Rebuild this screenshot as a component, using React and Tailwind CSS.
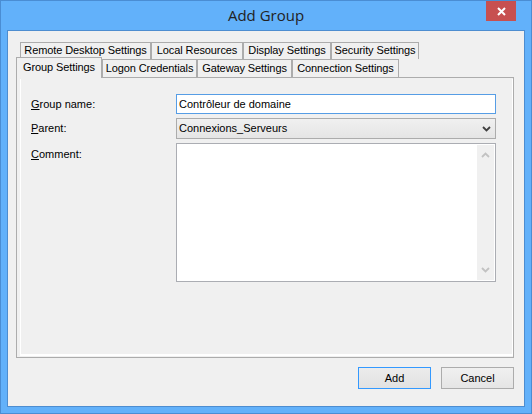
const topTabs = [
  { label: 'Remote Desktop Settings', w: 'w-[131px]' },
  { label: 'Local Resources', w: 'w-[92px]' },
  { label: 'Display Settings', w: 'w-[88px]' },
  { label: 'Security Settings', w: 'w-[88px]' },
];

const bottomTabs = [
  { label: 'Logon Credentials', w: 'w-[95px]' },
  { label: 'Gateway Settings', w: 'w-[95px]' },
  { label: 'Connection Settings', w: 'w-[107px]' },
];

function Chevron({ up, color, className }) {
  return (
    <svg width="9" height="6" viewBox="0 0 9 6" className={className}>
      <path
        d={up ? 'M1 5 L4.5 1.5 L8 5' : 'M1 1 L4.5 4.5 L8 1'}
        fill="none"
        stroke={color}
        strokeWidth="1.8"
      />
    </svg>
  );
}

function Label({ k, rest }) {
  return (
    <span>
      <span className="underline">{k}</span>
      {rest}
    </span>
  );
}

export default function App() {
  return (
    <div className="w-[532px] h-[414px] flex flex-col border border-[#4a8dd3] bg-[#62b1fa] font-['Liberation_Sans',Arial,sans-serif] text-[11px] text-black">
      {/* Title bar */}
      <div className="h-[29px] flex items-start relative">
        <div className="flex-1 h-[29px] flex items-center justify-center font-['Open_Sans',sans-serif] text-[15px] text-[#222]">
          Add Group
        </div>
        <div className="absolute right-[15px] top-0 w-[30px] h-[20px] bg-[#c75050] flex items-center justify-center">
          <svg width="9" height="9" viewBox="0 0 9 9">
            <path d="M1 1 L8 8 M8 1 L1 8" stroke="white" strokeWidth="2" />
          </svg>
        </div>
      </div>

      {/* Client area */}
      <div className="mx-[6px] mb-[6px] flex-1 border border-[#4d8dd0] bg-[#f0f0f0] pt-[11px] pl-[8px] pr-[10px] flex flex-col">
        {/* Tabs */}
        <div className="flex flex-col tracking-[-0.1px]">
          <div className="flex ml-[4px] h-[17px]">
            {topTabs.map((t) => (
              <div
                key={t.label}
                className={`${t.w} h-[17px] border border-b-0 border-[#acacac] bg-[#f0f0f0] flex items-center justify-center pb-px`}
              >
                {t.label}
              </div>
            ))}
          </div>
          <div className="flex items-end h-[19px] relative z-10 -mb-px">
            <div className="w-[86px] h-[21px] -mt-[2px] border border-b-0 border-[#acacac] bg-[#f0f0f0] flex items-center justify-center pb-[2px]">
              Group Settings
            </div>
            {bottomTabs.map((t) => (
              <div
                key={t.label}
                className={`${t.w} h-[19px] border border-[#acacac] bg-[#f0f0f0] flex items-center justify-center`}
              >
                {t.label}
              </div>
            ))}
          </div>
        </div>

        {/* Panel */}
        <div className="h-[281px] border border-[#acacac] bg-[#f0f0f0] pl-[3px] pt-px pb-px flex">
          <div className="flex-1 border-l border-r border-b-2 border-white pt-[15px] pl-[10px] flex flex-col gap-[4px]">
            <div className="flex items-center">
              <div className="w-[145px]">
                <Label k="G" rest="roup name:" />
              </div>
              <div className="w-[320px] h-[20px] border border-[#569de5] bg-white flex items-center pl-[2px]">
                Contrôleur de domaine
              </div>
            </div>
            <div className="flex items-center">
              <div className="w-[145px]">
                <Label k="P" rest="arent:" />
              </div>
              <div className="w-[320px] h-[21px] border border-[#acacac] bg-gradient-to-b from-[#f0f0f0] to-[#e5e5e5] flex items-center pl-[2px] pr-[4px]">
                <span className="flex-1">Connexions_Serveurs</span>
                <Chevron color="#404040" />
              </div>
            </div>
            <div className="flex items-start">
              <div className="w-[145px] pt-[3px]">
                <Label k="C" rest="omment:" />
              </div>
              <div className="w-[320px] h-[139px] border border-[#abadb3] bg-white flex justify-end p-px">
                <div className="w-[17px] bg-[#f0f0f0] flex flex-col items-center justify-between py-[7px]">
                  <Chevron up color="#c2c2c2" />
                  <Chevron color="#c2c2c2" />
                </div>
              </div>
            </div>
          </div>
        </div>

        {/* Buttons */}
        <div className="flex justify-end gap-[10px] mt-[9px]">
          <button
            type="button"
            className="w-[73px] h-[22px] border border-[#3399ff] bg-gradient-to-b from-[#ececec] to-[#e2e2e2] flex items-center justify-center"
          >
            Add
          </button>
          <button
            type="button"
            className="w-[73px] h-[22px] border border-[#acacac] bg-gradient-to-b from-[#f0f0f0] to-[#e5e5e5] flex items-center justify-center"
          >
            Cancel
          </button>
        </div>
      </div>
    </div>
  );
}
